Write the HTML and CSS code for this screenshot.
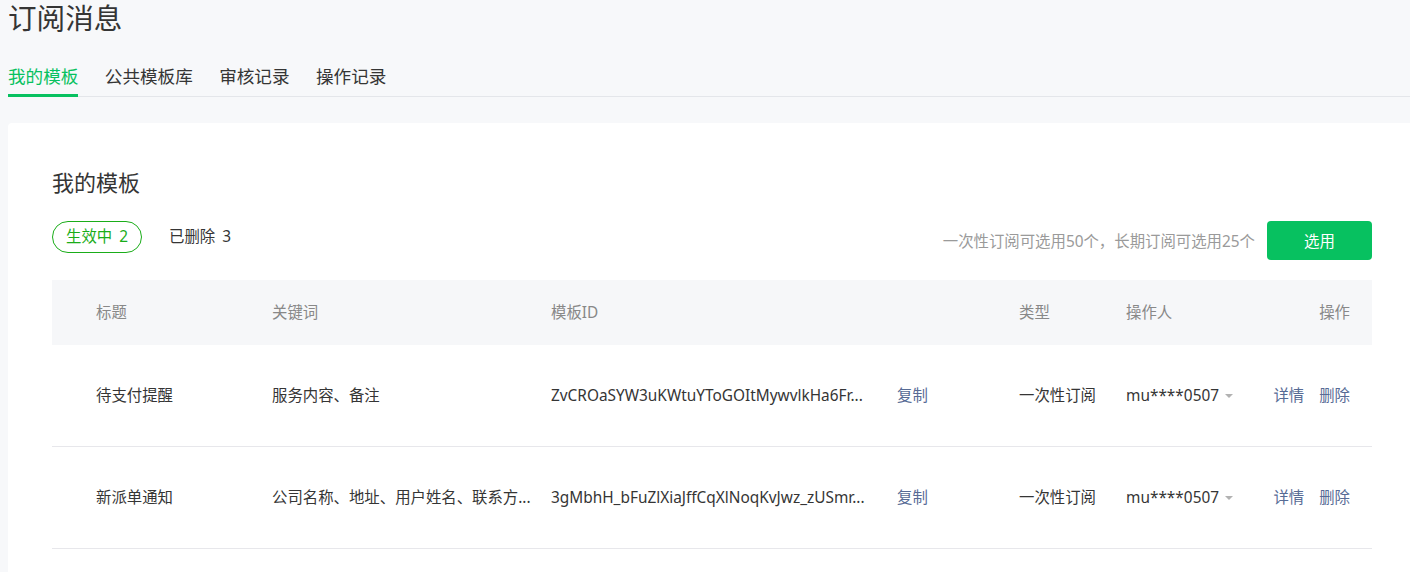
FILE: index.html
```html
<!DOCTYPE html>
<html lang="zh-CN">
<head>
<meta charset="utf-8">
<title>订阅消息</title>
<link rel="stylesheet" href="styles.css">
</head>
<body>
  <h1 class="page-title">订阅消息</h1>
  <nav class="tabs">
    <a class="tab tab-active">我的模板</a>
    <a class="tab">公共模板库</a>
    <a class="tab">审核记录</a>
    <a class="tab">操作记录</a>
  </nav>

  <section class="card">
    <h2 class="card-title">我的模板</h2>
    <div class="toolbar">
      <div class="filters">
        <span class="pill pill-active">生效中<span class="count">2</span></span>
        <span class="pill">已删除<span class="count">3</span></span>
      </div>
      <div class="actions">
        <span class="hint">一次性订阅可选用50个，长期订阅可选用25个</span>
        <button class="btn-primary">选用</button>
      </div>
    </div>

    <div class="table">
      <div class="row head">
        <div>标题</div>
        <div>关键词</div>
        <div>模板ID</div>
        <div>类型</div>
        <div>操作人</div>
        <div class="right">操作</div>
      </div>
      <div class="row">
        <div>待支付提醒</div>
        <div class="kw">服务内容、备注</div>
        <div class="id-cell"><span class="tid">ZvCROaSYW3uKWtuYToGOItMywvlkHa6Fr...</span><a class="link">复制</a></div>
        <div>一次性订阅</div>
        <div class="op">mu****0507<i class="caret"></i></div>
        <div class="right links"><a class="link">详情</a><a class="link">删除</a></div>
      </div>
      <div class="row">
        <div>新派单通知</div>
        <div class="kw">公司名称、地址、用户姓名、联系方...</div>
        <div class="id-cell"><span class="tid">3gMbhH_bFuZlXiaJffCqXlNoqKvJwz_zUSmr...</span><a class="link">复制</a></div>
        <div>一次性订阅</div>
        <div class="op">mu****0507<i class="caret"></i></div>
        <div class="right links"><a class="link">详情</a><a class="link">删除</a></div>
      </div>
    </div>
  </section>
</body>
</html>
```
FILE: styles.css
```css
html, body {
  margin: 0;
  background: #f7f8fa;
}
body {
  padding: 0 0 0 8px;
  overflow: hidden;
  font-family: "Noto Sans", "Noto Sans CJK SC", sans-serif;
  color: #353535;
}
.page-title {
  margin: 0;
  font-size: 28.6px;
  line-height: 36px;
  font-weight: 400;
  color: #353535;
}
.tabs {
  display: flex;
  gap: 26.4px;
  margin-top: 28px;
  border-bottom: 1px solid #e4e6ea;
}
.tab {
  font-size: 17.6px;
  line-height: 24px;
  padding-bottom: 6px;
  border-bottom: 3px solid transparent;
  margin-bottom: -1px;
  color: #353535;
}
.tab-active {
  color: #07c160;
  border-bottom-color: #07c160;
}
.card {
  margin-top: 26px;
  background: #fff;
  border-radius: 4px 0 0 4px;
  padding: 44px 38px 30px 44px;
}
.card-title {
  margin: 0 0 24px;
  font-size: 22px;
  line-height: 30px;
  font-weight: 400;
  color: #353535;
}
.toolbar {
  display: flex;
  justify-content: space-between;
  align-items: flex-start;
}
.filters {
  display: flex;
  align-items: center;
  gap: 12px;
}
.pill {
  box-sizing: border-box;
  height: 32px;
  line-height: 30px;
  padding: 0 14px;
  border: 1px solid transparent;
  border-radius: 16px;
  font-size: 15.4px;
  color: #353535;
  white-space: nowrap;
}
.pill-active {
  width: 90px;
  padding: 0;
  text-align: center;
  border-color: #1aad19;
  color: #1aad19;
}
.count {
  margin-left: 7px;
}
.actions {
  display: flex;
  align-items: center;
  gap: 12px;
}
.hint {
  font-size: 15.4px;
  color: #9a9a9a;
}
.btn-primary {
  width: 105px;
  height: 39px;
  border: 0;
  border-radius: 4px;
  background: #07c160;
  color: #fff;
  font-family: inherit;
  font-size: 15.4px;
}
.table {
  margin-top: 20px;
}
.row {
  display: grid;
  grid-template-columns: 176px 279px 468px 107px 1fr auto;
  align-items: center;
  height: 101px;
  padding: 0 22px 0 44px;
  font-size: 15.4px;
  line-height: 22px;
  border-bottom: 1px solid #e7e7eb;
  white-space: nowrap;
}
.row.head {
  height: 65px;
  background: #f6f7f9;
  border-bottom: 0;
  color: #888;
}
.right {
  text-align: right;
}
.id-cell {
  display: flex;
  align-items: center;
}
.tid {
  width: 330px;
  overflow: hidden;
  margin-right: 16px;
}
.link {
  color: #576b95;
  cursor: pointer;
}
.links .link + .link {
  margin-left: 15px;
}
.op {
  display: flex;
  align-items: center;
}
.caret {
  width: 0;
  height: 0;
  margin-left: 6px;
  border-left: 4px solid transparent;
  border-right: 4px solid transparent;
  border-top: 4px solid #b2b2b2;
}
```
